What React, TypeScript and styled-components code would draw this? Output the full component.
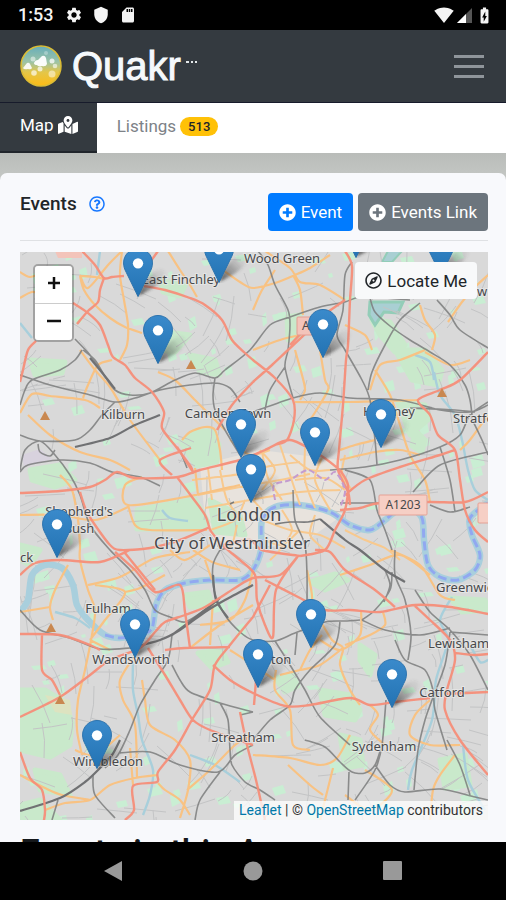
import React from "react";
import styled, { createGlobalStyle } from "styled-components";
import { FaMapMarkedAlt, FaPlusCircle, FaRegCompass, FaRegQuestionCircle } from "react-icons/fa";
import { MdSettings, MdShield, MdSdCard, MdSignalWifi4Bar, MdBatteryChargingFull } from "react-icons/md";

const GlobalStyle = createGlobalStyle`
  *, *::before, *::after { box-sizing: border-box; }
  body { margin: 0; background: #c0c3c0; font-family: Roboto, "Liberation Sans", sans-serif; color: #212529; }
  button { font-family: inherit; cursor: pointer; }
  svg { display: block; flex: none; }
`;

/* ---------- layout ---------- */

const Screen = styled.div`
  display: flex;
  flex-direction: column;
  height: 100vh;
  overflow: hidden;
`;

const StatusBar = styled.div`
  display: flex;
  justify-content: space-between;
  align-items: center;
  flex: none;
  height: 30px;
  padding: 0 12px 0 18px;
  background: #000;
  color: #f4f4f4;
`;

const StatusGroup = styled.div<{ $gap: number }>`
  display: flex;
  align-items: center;
  gap: ${(p) => p.$gap}px;
`;

const Clock = styled.time`
  font-size: 18px;
  font-weight: 500;
  line-height: 20px;
`;

const Header = styled.header`
  display: flex;
  justify-content: space-between;
  align-items: center;
  flex: none;
  height: 72px;
  padding: 0 18px 0 20px;
  background: #343a40;
`;

const Brand = styled.a`
  display: flex;
  align-items: center;
  gap: 10px;
  color: #f5f9fc;
  text-decoration: none;
`;

const BrandName = styled.span`
  font-family: "Liberation Sans", Arial, sans-serif;
  font-size: 40px;
  line-height: 48px;
  -webkit-text-stroke: 1px #f5f9fc;
`;

const BrandDots = styled.svg`
  align-self: flex-start;
  margin: 19px 0 0 -5px;
`;

const MenuButton = styled.button`
  display: flex;
  flex-direction: column;
  gap: 7px;
  padding: 4px;
  border: 0;
  background: none;
`;

const MenuLine = styled.span`
  width: 30px;
  height: 3px;
  background: #8f959b;
`;

const Tabs = styled.nav`
  display: flex;
  flex: none;
  height: 51px;
  background: #fff;
  border-top: 1px solid #171b2b;
`;

const Tab = styled.a<{ $active?: boolean }>`
  display: flex;
  align-items: center;
  gap: 4px;
  padding: 0 19px 4px 20px;
  font-size: 17px;
  text-decoration: none;
  color: ${(p) => (p.$active ? "#fff" : "#7d8287")};
  background: ${(p) => (p.$active ? "#343a40" : "transparent")};
  border-bottom: ${(p) => (p.$active ? "2px solid #20252b" : "0")};
`;

const Badge = styled.span`
  padding: 0 8px;
  border-radius: 10px;
  background: #ffc107;
  color: #212529;
  font-size: 13px;
  font-weight: 500;
  line-height: 19px;
`;

const Content = styled.main`
  flex: 1;
  min-height: 0;
  overflow: hidden;
  padding-top: 20px;
  background: linear-gradient(#b9bcb9, #c2c5c2 20px);
`;

const Card = styled.section`
  min-height: 100%;
  padding: 20px 18px 0 20px;
  border-radius: 7px 7px 0 0;
  background: #f8f9fc;
`;

const Toolbar = styled.div`
  display: flex;
  justify-content: space-between;
  align-items: flex-start;
  padding-bottom: 9px;
  margin-bottom: 11px;
  border-bottom: 1px solid #dfe1e4;
`;

const Title = styled.h1`
  display: flex;
  align-items: center;
  gap: 12px;
  margin: 0;
  font-size: 19px;
  font-weight: 500;
  line-height: 22px;
`;

const HelpButton = styled.button`
  display: flex;
  align-items: center;
  padding: 0;
  border: 0;
  background: none;
  color: #1677ff;
`;

const Actions = styled.div`
  display: flex;
  gap: 5px;
`;

const ActionButton = styled.button<{ $color: string }>`
  display: flex;
  align-items: center;
  gap: 5px;
  height: 38px;
  padding: 0 11px;
  border: 0;
  border-radius: 4px;
  background: ${(p) => p.$color};
  color: #fff;
  font-size: 17px;
`;

const AreaHeading = styled.h2`
  margin: 12px 0 0;
  font-size: 35px;
  font-weight: 500;
  line-height: 42px;
  color: #15181b;
`;

const NavBar = styled.nav`
  display: flex;
  justify-content: center;
  align-items: center;
  gap: 116px;
  flex: none;
  height: 58px;
  background: #000;
`;

const NavKey = styled.button`
  padding: 0;
  border: 0;
  background: none;
  color: #999;
`;

/* ---------- map ---------- */

const MapFrame = styled.div`
  position: relative;
  overflow: hidden;
`;

const MapDrawing = styled.svg`
  width: 100%;
  height: auto;
`;

const Pin = styled.button<{ $x: number; $y: number }>`
  position: absolute;
  left: ${(p) => p.$x}%;
  top: ${(p) => p.$y}%;
  transform: translate(-15px, -49px);
  padding: 0;
  border: 0;
  background: none;
`;

const ZoomControl = styled.div`
  position: absolute;
  top: 12px;
  left: 13px;
  display: flex;
  flex-direction: column;
  border: 2px solid rgba(0, 0, 0, 0.25);
  border-radius: 5px;
  background-clip: padding-box;
  overflow: hidden;
`;

const ZoomButton = styled.button`
  display: grid;
  place-items: center;
  width: 37px;
  height: 37px;
  padding: 0 0 3px;
  border: 0;
  background: #fff;
  & + & { border-top: 1px solid #ccc; }
`;

const LocateButton = styled.button`
  position: absolute;
  top: 10px;
  right: 11px;
  display: flex;
  align-items: center;
  gap: 5px;
  height: 37px;
  padding: 0 10px;
  border: 0;
  border-radius: 4px;
  background: #f8f9fa;
  color: #212529;
  font-size: 17px;
`;

const Attribution = styled.div`
  position: absolute;
  right: 0;
  bottom: 0;
  padding: 0 5px;
  background: rgba(255, 255, 255, 0.75);
  color: #333;
  font-size: 14px;
  line-height: 19px;
  white-space: nowrap;
  a { color: #0078a8; text-decoration: none; }
`;

const MAP = { x: 20, y: 252, w: 468, h: 568 };

const toPoints = (s: string) => s.split(" ").map((p) => p.split(",").map(Number));

/* Joins points with a Catmull-Rom curve. */
const curve = (s: string) => {
  const p = toPoints(s);
  let d = `M${p[0][0]} ${p[0][1]}`;
  for (let i = 0; i < p.length - 1; i++) {
    const a = p[i - 1] || p[i];
    const b = p[i];
    const c = p[i + 1];
    const e = p[i + 2] || c;
    const k = 7;
    d += `C${b[0] + (c[0] - a[0]) / k} ${b[1] + (c[1] - a[1]) / k} ${c[0] - (e[0] - b[0]) / k} ${c[1] - (e[1] - b[1]) / k} ${c[0]} ${c[1]}`;
  }
  return d;
};

const mainRoads = [
  "82,251 95,265 104,278 112,277 124,276",
  "104,278 100,290 98,302 88,311 77,324",
  "144,286 165,290 190,298 205,305 222,320 232,340 245,353 253,360 275,378 293,400 294,420 287,440 275,445 265,450",
  "73,303 88,313 100,325 108,345 113,357 125,365 135,378 152,392 164,412 162,428 177,448 191,467 193,474",
  "140,272 150,262 158,251",
  "36,341 28,350 23,370 20,382",
  "345,251 352,266 350,300 348,345 346,360 343,405 339,450 338,470 348,492 350,505",
  "290,345 310,325 345,300",
  "20,493 60,491 90,487 105,480 117,472 135,478 178,477 200,470 240,460 265,450 290,440 320,455 340,470",
  "177,477 192,497 205,515 210,530",
  "80,492 86,510 95,525 110,545 120,550 150,548 180,540 210,527",
  "193,472 177,447",
  "191,448 160,460 172,475",
  "253,382 272,365 288,350 320,320",
  "217,430 232,405 253,382",
  "488,352 460,380 440,390 418,400 430,415 438,435 455,450 460,480 465,510 475,530 488,542",
  "345,495 365,480 400,467 440,455 455,450",
  "340,510 360,508 380,503 430,502 465,502 488,492",
  "340,470 348,485 345,510 335,530 325,550 300,556",
  "20,575 35,563 60,560 100,562 130,550",
  "20,634 60,635 90,645 100,650",
  "42,635 42,670 52,680 60,695",
  "20,717 60,697 90,675 110,660 140,648 155,632 165,622 185,615 205,607 235,588 253,578 280,575 298,556",
  "148,648 165,675 180,700 193,720 210,730 253,745",
  "253,617 230,645 215,665 210,690 193,718 175,750 158,772 157,782 133,786 134,810 125,820",
  "165,650 185,648 230,647",
  "115,552 135,570 155,592 180,585 185,612 190,648",
  "125,553 155,590",
  "213,665 230,680 253,693 285,706 310,705 350,698 370,705 395,702 430,698",
  "210,530 222,545 240,560 255,575 257,600 265,625 273,637 276,590 298,556",
  "222,545 250,540 262,550 300,556",
  "315,550 330,552 345,570 375,590 395,607",
  "265,580 300,598 325,610 350,610 380,612 415,605 450,607 488,614",
  "415,606 430,620 450,640 455,660 447,690 445,710 460,740 488,775",
  "258,650 256,680 254,705",
  "253,617 262,600 270,585",
  "445,694 488,692",
  "20,752 30,778 42,790 45,810 44,820",
  "240,712 247,745 256,780 265,820",
  "455,653 475,655 488,654",
];

const minorRoads = [
  "20,272 30,277 45,273 70,274",
  "80,276 95,277 104,279",
  "20,298 32,292 45,295",
  "122,251 108,265 88,288 80,275",
  "80,276 84,290 95,305 110,318 125,327 142,333",
  "122,251 120,275 124,300 128,325 127,345 120,360",
  "168,251 180,270 190,285 197,297",
  "220,268 240,282 253,288 275,283 295,275 310,268 330,255",
  "293,275 300,290 303,315",
  "265,251 290,268 300,282 320,285 345,300",
  "253,310 262,290 275,270",
  "345,325 365,335 372,350",
  "420,305 425,320 435,335 432,350",
  "448,322 462,302 475,287 488,275",
  "425,352 450,365 470,360",
  "20,413 32,394 50,396 85,400 100,408",
  "80,350 95,370 110,387 130,420 160,460",
  "112,360 98,365 88,385 83,398",
  "28,415 50,435 80,452 110,460 130,470",
  "158,372 175,380 195,400 210,415 225,430",
  "182,440 190,432 205,427 215,430 220,450 222,470",
  "142,477 125,485 128,505 185,497 240,485",
  "128,505 135,525 150,530 207,530",
  "195,468 198,495",
  "20,515 60,515 95,520 128,507",
  "60,475 72,490 78,520 80,545 80,560 88,590 95,610 92,635 85,670 78,700 77,730 82,755",
  "68,565 55,590 50,607 53,620",
  "20,612 50,607",
  "88,585 120,577 155,558 190,552",
  "95,585 125,592 105,620 90,640",
  "125,592 140,588 165,575",
  "135,655 120,680 123,700 135,725 137,778",
  "142,680 145,700 150,725 175,740 190,760 188,790 180,818",
  "90,640 110,650",
  "20,775 45,788 62,795 90,800",
  "45,810 65,803 90,800 110,785 135,778 158,775",
  "130,748 133,785",
  "158,783 165,790 180,800 190,815",
  "187,790 210,770 235,745 250,735",
  "75,750 95,755 120,735",
  "253,755 290,758 320,765 337,758 350,735",
  "333,768 325,800 320,820",
  "288,765 310,785 323,795",
  "365,770 392,790 370,810 345,795",
  "430,820 433,790 440,775 455,755",
  "295,350 302,375 305,390 300,400",
  "253,350 280,340 300,335",
  "320,350 325,380 328,390 310,420 300,430",
  "370,390 380,365 400,360 425,350",
  "295,402 350,402 418,400",
  "375,370 390,395 400,425 410,455 425,480 430,502",
  "340,450 355,445 375,440",
  "340,460 375,452 400,450 420,455",
  "488,415 470,440 460,450",
  "307,570 312,600 300,625",
  "340,575 370,565 400,555 430,575",
  "390,550 420,565 440,595 455,600",
  "361,610 360,635 340,650 320,640",
  "320,620 332,640 343,648 340,665 350,690 360,705",
  "345,645 370,635 385,625 383,612",
  "343,648 320,665 300,670 280,675",
  "300,670 310,650 322,635",
  "276,670 275,690 290,710 293,745 310,750",
  "370,705 378,715 370,730 385,745",
  "430,700 415,715 410,735 430,745 460,745",
  "190,648 220,625 253,605",
  "230,650 253,665 275,680",
  "170,550 185,560 210,545",
  "205,560 212,580",
  "200,625 230,620 245,600 253,570",
  "213,600 210,645",
  "193,550 212,562 240,570",
];

const cityStreets = [
  "192,480 240,474 270,466 300,462",
  "198,495 240,487 280,480 310,474",
  "205,508 250,500 300,492 340,490",
  "220,470 227,500 242,520",
  "240,462 246,490 262,510",
  "262,452 268,478 282,500",
  "280,445 290,475 300,505",
  "305,448 305,480 315,508",
  "322,458 315,480 330,510",
  "208,468 212,500",
  "230,440 250,455 270,450",
  "260,450 275,470 262,490",
  "290,455 310,470 330,470",
  "295,480 325,478 345,490",
  "262,520 290,530 320,535 345,548",
  "282,510 292,530 280,550 270,560",
  "315,515 310,535 325,550",
  "300,530 282,545 265,540",
  "345,530 365,540 385,548 400,560",
  "210,530 235,520 245,500",
  "237,525 232,545 225,548",
  "345,455 342,475 352,490",
];

const rails = [
  "75,339 90,355 104,375 115,390 130,395 150,393 175,380 195,373 215,378 225,370 250,350 270,325 290,317 320,307 345,302 362,297 410,300",
  "258,251 268,265 275,285 288,310 290,325 288,350 285,367 293,398",
  "352,262 345,275 343,310 337,335 345,350 362,380 370,400 375,440 377,465",
  "370,298 375,312 390,326 410,340 430,352 450,365 465,385 470,400 472,415",
  "437,300 450,315 460,330 488,348",
  "420,303 400,320 385,345 372,372 368,390",
  "20,375 50,385 90,395 115,402 135,398 160,390 190,385 215,383 230,388 240,402",
  "83,350 95,360 104,375",
  "20,405 25,390 32,380 60,370 75,360 82,350",
  "20,435 40,441 75,440 90,430 102,415 115,402",
  "20,472 28,465 60,460 90,463 112,472 140,477 160,486",
  "20,470 25,450 40,441 55,455 70,475 80,495 90,525 110,550 130,570 145,590 155,610 170,617 185,622 205,610",
  "38,444 40,452 50,456 55,450",
  "215,378 213,395 215,410 225,430 240,455",
  "180,450 187,468",
  "253,412 293,398 320,393 350,398 400,400 440,410 470,412 488,405",
  "285,367 270,390 265,410",
  "410,408 455,410 475,412",
  "330,470 365,467 400,460 440,447 460,435 470,415 488,402",
  "470,415 482,440 488,455",
  "413,492 440,465 488,452",
  "440,447 450,480 455,512",
  "345,470 370,480 377,510 385,530 392,550",
  "340,503 380,503",
  "430,505 450,512 470,507",
  "20,610 40,630 70,638 100,649 130,648",
  "172,635 168,660 155,680 140,705 130,730 118,755 105,768",
  "172,665 180,680 190,692 220,703 253,712",
  "220,703 228,720 230,750 232,765 245,782 260,790 275,800",
  "220,550 213,565 214,590 225,615 240,632 253,640 275,641 295,633 325,622 345,621 360,620",
  "227,548 220,550",
  "293,490 295,520 305,545 307,575 307,600",
  "395,550 395,575 405,600 411,635 408,660",
  "392,572 390,590 375,610 362,620",
  "385,570 390,585 384,602",
  "362,620 385,630 420,635 450,628",
  "450,632 488,635",
  "275,641 290,665 305,690 320,717 350,745",
  "340,622 335,645 310,670 295,690 290,705 270,720 253,740",
  "297,633 295,655",
  "395,640 405,660 425,670 433,690 435,710 447,750",
  "450,632 445,665 432,700 425,720 418,750 414,790",
  "386,700 382,745 375,770 355,800",
  "415,590 430,612 450,630 470,655 488,690",
  "93,775 95,795 115,818",
  "52,820 58,800",
  "120,753 150,752 180,765 218,772 235,755 253,745",
  "195,820 200,800 220,772",
  "253,712 240,715",
  "305,740 325,747 340,762 352,772 365,773 375,765 382,745",
  "375,765 390,785 405,792 440,789 475,797 488,800",
  "349,772 348,800",
  "447,740 460,765 470,795",
];

const heavyRails = [
  "75,447 110,438 135,425 160,415",
  "90,358 104,375 115,389",
  "130,648 160,640 180,630 205,612 225,600 253,585",
  "172,635 205,610 220,598",
  "320,519 345,540 360,550 385,570 405,582",
  "20,811 60,798 85,782 100,768 112,755 120,740",
  "213,575 216,600 228,618",
];

const river = "20,612 28,600 32,575 45,565 62,568 73,585 77,605 88,620 105,635 120,638 140,635 152,628 156,605 165,590 185,583 210,580 240,580 253,570 261,550 262,520 275,507 300,505 330,512 350,525 370,530 385,520 395,512 410,508 422,518 424,540 428,565 440,577 458,580 475,570 480,555 472,535 470,518 488,503";
const riverDashes = "105,635 120,638 140,635 152,628 156,605 165,590 185,583 210,580 240,580 253,570 261,550 262,520 275,507 300,505 330,512 350,525 370,530 385,520 395,512 410,508 422,518 424,540 428,565 440,577 458,580 475,570 480,555 472,535 470,518 488,503";

const streams = [
  "133,662 133,690 138,715 142,740 153,770 150,795 143,815",
  "434,372 440,395 455,415 462,440 468,470 475,490 488,500",
  "452,597 440,620 448,640 436,680 432,720 412,770 408,790",
  "162,510 170,518 188,521",
  "415,355 430,362 434,380",
  "100,251 97,275",
  "190,755 215,765 240,782",
  "463,745 468,780 485,810",
  "55,612 75,618 90,628",
  "20,323 32,338",
  "470,645 480,662 488,660",
];

const parks = [
  "20,690 45,690 65,702 72,722 70,745 50,757 20,750",
  "137,510 195,499 208,522 200,529 137,529",
  "181,443 195,431 213,431 219,445 217,462 196,466",
  "395,350 425,350 442,370 438,385 412,380",
  "398,402 425,405 430,418 410,435",
  "320,690 350,695 360,710 355,720 325,715",
  "275,678 293,675 298,686 285,692",
  "340,735 360,740 363,765 345,768",
  "210,500 240,515 245,535 215,532",
  "185,595 208,592 213,606 190,607",
  "150,330 190,335 175,352 158,350",
  "30,470 60,465 75,480 55,487 32,480",
  "160,280 185,286 180,296 163,292",
  "372,320 390,322 405,345 395,352 380,335",
  "450,598 485,600 488,610 462,612",
  "198,653 222,650 228,662 212,668",
  "310,582 335,574 348,580 325,590",
  "35,770 60,775 70,795 40,790",
  "440,760 465,755 470,785 445,788",
  "360,645 375,655 370,675 360,660",
  "30,360 65,362 62,373 35,375",
  "190,355 215,360 220,375 200,372",
  "415,430 425,440 422,452 412,446",
  "287,317 300,315 302,335 288,340",
  "20,805 40,800 60,820 20,820",
  "20,545 40,550 30,565 20,560",
];

const peaks = ["191,365", "45,416", "442,393", "51,628", "60,700"];

type Label = { text: string; x: number; y: number; size?: number };
const labels: Label[] = [
  { text: "East Finchley", x: 181, y: 284 },
  { text: "Wood Green", x: 282, y: 263 },
  { text: "Kilburn", x: 123, y: 419 },
  { text: "Camden Town", x: 228, y: 418 },
  { text: "Hackney", x: 389, y: 416 },
  { text: "Shepherd's", x: 79, y: 516 },
  { text: "Bush", x: 79, y: 533 },
  { text: "London", x: 249, y: 521, size: 18 },
  { text: "City of Westminster", x: 232, y: 549, size: 17 },
  { text: "Fulham", x: 108, y: 613 },
  { text: "Wandsworth", x: 131, y: 664 },
  { text: "Brixton", x: 269, y: 664 },
  { text: "Catford", x: 442, y: 697 },
  { text: "Streatham", x: 243, y: 742 },
  { text: "Sydenham", x: 384, y: 751 },
  { text: "Wimbledon", x: 108, y: 766 },
];
const edgeLabels: Label[] = [
  { text: "Stratford", x: 453, y: 423 },
  { text: "Greenwich", x: 436, y: 592 },
  { text: "Lewisham", x: 428, y: 648 },
  { text: "w", x: 477, y: 296 },
  { text: "ck", x: 20, y: 562 },
];

const pins = [
  [356, 258], [441, 276], [219, 283], [138, 297], [323, 358], [158, 364], [381, 448], [241, 458],
  [315, 466], [251, 503], [57, 558], [311, 648], [135, 658], [258, 688], [392, 708], [97, 769],
];

/* Repeatable pseudo-random texture of side streets and small gardens. */
const makeTexture = () => {
  let seed = 7;
  const rnd = () => {
    seed = (seed * 16807) % 2147483647;
    return seed / 2147483647;
  };
  let streets = "";
  let gardens = "";
  for (let i = 0; i < 420; i++) {
    const x = MAP.x + rnd() * MAP.w;
    const y = MAP.y + rnd() * MAP.h;
    const base = Math.sin(x / 90) + Math.cos(y / 70);
    const a = base + (rnd() > 0.5 ? Math.PI / 2 : 0) + rnd() * 0.2;
    const l = 12 + rnd() * 34;
    streets += `M${x.toFixed(0)} ${y.toFixed(0)}q${(Math.cos(a) * l * 0.5 + 3).toFixed(0)} ${(Math.sin(a) * l * 0.5).toFixed(0)} ${(Math.cos(a) * l).toFixed(0)} ${(Math.sin(a) * l).toFixed(0)}`;
  }
  for (let i = 0; i < 260; i++) {
    const x = MAP.x + rnd() * MAP.w;
    const y = MAP.y + rnd() * MAP.h;
    const w = 3 + rnd() * 10;
    const h = 3 + rnd() * 8;
    if (x > 200 && x < 345 && y > 440 && y < 550) continue;
    gardens += `M${x.toFixed(0)} ${y.toFixed(0)}l${w.toFixed(0)} ${(-h / 3).toFixed(0)}l${(w / 4).toFixed(0)} ${h.toFixed(0)}l${(-w).toFixed(0)} ${(h / 3).toFixed(0)}z`;
  }
  return { streets, gardens };
};
const texture = makeTexture();

const Lines = ({ paths, color, width, dash, opacity }: { paths: string[]; color: string; width: number; dash?: string; opacity?: number }) => (
  <path d={paths.map(curve).join("")} fill="none" stroke={color} strokeWidth={width} strokeDasharray={dash} opacity={opacity} strokeLinejoin="round" />
);

const MapLabel = ({ label, anchor }: { label: Label; anchor: "start" | "middle" }) => (
  <text
    x={label.x}
    y={label.y}
    fontSize={label.size || 13}
    textAnchor={anchor}
    stroke="#e9e9e9"
    strokeOpacity={0.75}
    strokeWidth={2}
    paintOrder="stroke"
  >
    {label.text}
  </text>
);

const LondonMap = () => (
  <MapDrawing viewBox={`${MAP.x} ${MAP.y} ${MAP.w} ${MAP.h}`} role="img" aria-label="Map of London">
    <rect x={MAP.x} y={MAP.y} width={MAP.w} height={MAP.h} fill="#d9d9d9" />
    <path d="M200 465L260 450L340 460L350 510L300 545L215 548L205 520Z" fill="#e8e3dd" />
    <path d={texture.gardens} fill="#c9eed3" />
    <path d={parks.map((p) => "M" + p.replace(/ /g, "L") + "Z").join("")} fill="#c9e9cb" stroke="#c9e9cb" strokeWidth={5} strokeLinejoin="round" />
    <path d="M45 695L70 700L72 715L55 712Z" fill="#dde3c0" />
    <path d="M370 302L403 302L398 313L384 312L375 325L369 315Z" fill="#a9cfd3" stroke="#93cdb8" strokeWidth={3} />
    <path d="M388 251L402 251L392 262L382 262Z" fill="#a9cfd3" stroke="#93cdb8" strokeWidth={2} />
    <path d="M22 455l18-6 12 10-28 8z" fill="#d8d2de" />
    <path d={texture.streets} fill="none" stroke="#c3c4c5" strokeWidth={1} />
    <Lines paths={streams} color="#a8cfdb" width={2.4} />
    <Lines paths={[river]} color="#a9cfdd" width={6.5} />
    <Lines paths={[riverDashes]} color="#91a8f0" width={3} dash="9 4" />
    <Lines paths={cityStreets} color="#f8c98e" width={2} />
    <Lines paths={minorRoads} color="#f8c283" width={2.2} />
    <Lines paths={rails} color="#7b7c7d" width={1.6} opacity={0.85} />
    <Lines paths={heavyRails} color="#707173" width={2.2} />
    <Lines paths={mainRoads} color="#f58e79" width={2.4} opacity={0.95} />
    <Lines paths={["275,500 274,485 290,480 308,470 325,480 335,472 345,490 340,508"]} color="#c49ccf" width={2} dash="6 3" />
    <Lines paths={["275,524 290,522 308,522 320,519", "230,504 234,502"]} color="#7b7c7d" width={1.6} />
    {peaks.map((p) => (
      <path key={p} d={`M${p.replace(",", " ")}m0 -5l5 9h-10z`} fill="#c98850" />
    ))}
    <path d="M55 251h27v7h-24z" fill="#f3c4ba" />
    <rect x={297} y={317} width={26} height={18} rx={1} fill="#f3c4ba" stroke="#e39d92" />
    <rect x={379} y={495} width={48} height={20} rx={1} fill="#f6cfc5" stroke="#e5a195" />
    <rect x={478} y={503} width={16} height={20} rx={1} fill="#f6cfc5" stroke="#e5a195" />
    <g fontFamily='"Noto Sans", sans-serif' fill="#48494b">
      <text x={302} y={330} fontSize={12}>A</text>
      <text x={403} y={509} fontSize={12} textAnchor="middle">A1203</text>
      {labels.map((l) => <MapLabel key={l.text} label={l} anchor="middle" />)}
      {edgeLabels.map((l) => <MapLabel key={l.text} label={l} anchor="start" />)}
    </g>
  </MapDrawing>
);

const PinIcon = () => (
  <svg width="50" height="49" viewBox="0 0 41.7 41">
    <defs>
      <linearGradient id="pin-fill" x1="0" y1="0" x2="0" y2="1">
        <stop offset="0" stopColor="#3a8acb" />
        <stop offset="1" stopColor="#2373b3" />
      </linearGradient>
      <linearGradient id="pin-shade" x1="0" y1="1" x2="1" y2="0">
        <stop offset="0" stopColor="#222" stopOpacity="0.75" />
        <stop offset="0.8" stopColor="#444" stopOpacity="0.08" />
      </linearGradient>
      <filter id="pin-soft"><feGaussianBlur stdDeviation="1.2" /></filter>
    </defs>
    <path d="M12.5 40C16 30 21 21 29 18C36 17 37 23 32 28C27 33 19 37 12.5 40Z" fill="url(#pin-shade)" filter="url(#pin-soft)" />
    <path d="M12.5 .4C5.8 .4 .4 5.8 .4 12.5c0 3 .9 5.400 2.300 8L12.500 40.600l9.800-20.100c1.400-2.600 2.300-5 2.300-8C24.600 5.800 19.200 .4 12.500 .4z" fill="url(#pin-fill)" stroke="#2a71ac" strokeWidth=".8" />
    <circle cx="12.500" cy="12.800" r="4.300" fill="#fff" />
  </svg>
);

const Logo = () => (
  <svg width="42" height="42" viewBox="0 0 42 42">
    <defs>
      <linearGradient id="logo-sky" x1="0" y1="0" x2="0" y2="1">
        <stop offset="0" stopColor="#67aebb" />
        <stop offset=".4" stopColor="#9cc3a6" />
        <stop offset=".65" stopColor="#e3c64a" />
        <stop offset="1" stopColor="#fdbb14" />
      </linearGradient>
    </defs>
    <circle cx="21" cy="21" r="20" fill="url(#logo-sky)" stroke="#dcbc34" strokeWidth="1.500" />
    <g fill="#fff">
      <path d="M14 18q1-3 4-3l4-4q3-1 4 2l1 6q-1 3-5 2q-4 1-5-1q-3 0-3-2z" opacity=".95" />
      <path d="M3 23l4-5q2-1 3 1l2 4q-1 2-4 1q-4 1-5-1z" opacity=".9" />
      <circle cx="13" cy="14" r="2.500" opacity=".5" />
      <circle cx="32" cy="16" r="2.500" opacity=".75" />
      <circle cx="35" cy="21" r="2.300" opacity=".6" />
      <circle cx="20" cy="24" r="2.500" opacity=".7" />
      <circle cx="32" cy="29" r="3.500" opacity=".5" />
      <circle cx="14" cy="28" r="2.800" opacity=".65" />
      <circle cx="26" cy="8" r="2" opacity=".3" />
    </g>
  </svg>
);

export default function App() {
  return (
    <>
      <GlobalStyle />
      <Screen>
        <StatusBar>
          <StatusGroup $gap={12}>
            <Clock>1:53</Clock>
            <StatusGroup $gap={9}>
              <MdSettings size={18} />
              <MdShield size={18} />
              <MdSdCard size={18} />
            </StatusGroup>
          </StatusGroup>
          <StatusGroup $gap={2}>
            <MdSignalWifi4Bar size={20} />
            <svg width="17" height="17" viewBox="0 0 17 17">
              <path d="M16 1V16H1Z" fill="#555" />
              <path d="M10 7V16H1Z" fill="#fff" />
            </svg>
            <MdBatteryChargingFull size={19} />
          </StatusGroup>
        </StatusBar>
        <Header>
          <Brand href="#home">
            <Logo />
            <BrandName>Quakr</BrandName>
            <BrandDots width="12" height="3" viewBox="0 0 12 3">
              <path d="M0 0h3v2H0zM5 0h2v2H5zM9 0h2v2H9z" fill="#e4e8eb" />
            </BrandDots>
          </Brand>
          <MenuButton aria-label="Menu">
            <MenuLine />
            <MenuLine />
            <MenuLine />
          </MenuButton>
        </Header>
        <Tabs>
          <Tab href="#map" $active>
            Map <FaMapMarkedAlt size={20} />
          </Tab>
          <Tab href="#listings">
            Listings <Badge>513</Badge>
          </Tab>
        </Tabs>
        <Content>
          <Card>
            <Toolbar>
              <Title>
                Events
                <HelpButton aria-label="Help"><FaRegQuestionCircle size={16} /></HelpButton>
              </Title>
              <Actions>
                <ActionButton $color="#007bff"><FaPlusCircle size={17} />Event</ActionButton>
                <ActionButton $color="#6c757d"><FaPlusCircle size={17} />Events Link</ActionButton>
              </Actions>
            </Toolbar>
            <MapFrame>
              <LondonMap />
              {pins.map(([x, y]) => (
                <Pin key={`${x}-${y}`} aria-label="Event marker" $x={((x - MAP.x) / MAP.w) * 100} $y={((y - MAP.y) / MAP.h) * 100}>
                  <PinIcon />
                </Pin>
              ))}
              <ZoomControl>
                <ZoomButton aria-label="Zoom in">
                  <svg width="14" height="14" viewBox="0 0 14 14"><path d="M7 1V13M1 7H13" stroke="#111" strokeWidth="2.500" /></svg>
                </ZoomButton>
                <ZoomButton aria-label="Zoom out">
                  <svg width="14" height="14" viewBox="0 0 14 14"><path d="M0 7H14" stroke="#111" strokeWidth="2.500" /></svg>
                </ZoomButton>
              </ZoomControl>
              <LocateButton><FaRegCompass size={17} />Locate Me</LocateButton>
              <Attribution>
                <a href="#leaflet">Leaflet</a> | © <a href="#osm">OpenStreetMap</a> contributors
              </Attribution>
            </MapFrame>
            <AreaHeading>Events in this Area</AreaHeading>
          </Card>
        </Content>
        <NavBar>
          <NavKey aria-label="Back"><svg width="24" height="22" viewBox="0 0 24 22"><path d="M3 11L21 1V21Z" fill="currentColor" /></svg></NavKey>
          <NavKey aria-label="Home"><svg width="24" height="22" viewBox="0 0 24 22"><circle cx="12" cy="11" r="9.500" fill="currentColor" /></svg></NavKey>
          <NavKey aria-label="Recent apps"><svg width="24" height="22" viewBox="0 0 24 22"><rect x="2" y="1" width="19" height="19" rx="1" fill="currentColor" /></svg></NavKey>
        </NavBar>
      </Screen>
    </>
  );
}
